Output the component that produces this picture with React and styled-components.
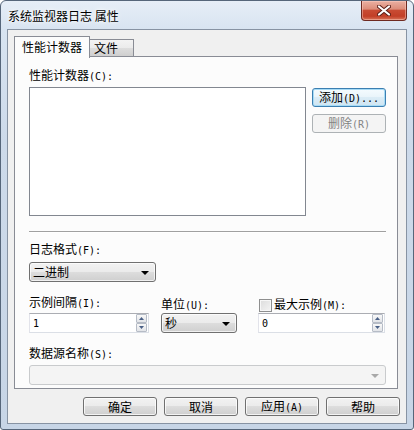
import React from "react";
import styled, { createGlobalStyle, css } from "styled-components";

const GlobalStyle = createGlobalStyle`
  html, body {
    margin: 0;
    padding: 0;
    background: #ffffff;
  }
  body {
    font-family: "Noto Sans CJK SC", "Liberation Sans", sans-serif;
    font-size: 12px;
    color: #000;
  }
`;

const Window = styled.div`
  box-sizing: border-box;
  width: 414px;
  height: 430px;
  display: flex;
  flex-direction: column;
  padding: 0 6px 5px;
  border: 1px solid #56667a;
  border-radius: 6px 6px 3px 3px;
  background: linear-gradient(180deg, #e6eef7 0px, #d8e4f1 28px, #cddaea 140px, #c7d5e6 100%);
`;

const TitleBar = styled.div`
  height: 28px;
  display: flex;
  justify-content: space-between;
  align-items: flex-start;
`;

const Title = styled.div`
  margin: 8px 0 0 1px;
  line-height: 14px;
  text-shadow: 0 0 6px #fff, 0 0 3px #fff;
`;

const CloseButton = styled.div`
  box-sizing: border-box;
  width: 46px;
  height: 20px;
  border: 1px solid #6e2a21;
  border-top: none;
  border-radius: 0 0 4px 4px;
  background: linear-gradient(180deg, #eab0a2 0%, #dc8d7a 42%, #c84b33 50%, #c23f27 80%, #d8745a 100%);
  box-shadow: inset 0 0 0 1px rgba(255, 210, 200, 0.45);
  display: flex;
  align-items: center;
  justify-content: center;
`;

const Client = styled.div`
  flex: 1;
  display: flex;
  flex-direction: column;
  border: 1px solid #8793a3;
  background: #f0f0f0;
  padding: 6px 6px 0;
`;

const TabStrip = styled.div`
  display: flex;
  align-items: flex-end;
  height: 20px;
`;

const Tab = styled.div`
  box-sizing: border-box;
  border: 1px solid #898c95;
  border-bottom: none;
  line-height: 14px;
  ${(p) =>
    p.$active
      ? css`
          height: 22px;
          margin-bottom: -2px;
          position: relative;
          z-index: 1;
          padding: 3px 7px 0;
          background: #fcfcfc;
        `
      : css`
          width: 44px;
          height: 17px;
          border-left: none;
          padding: 1px 0 0 4px;
          background: linear-gradient(180deg, #f3f3f3 0%, #ebebeb 50%, #dddddd 51%, #cfcfcf 100%);
        `}
`;

const Panel = styled.div`
  box-sizing: border-box;
  height: 333px;
  margin-right: 2px;
  border: 1px solid #898c95;
  background: #fcfcfc;
  padding: 11px 11px 0 14px;
  display: flex;
  flex-direction: column;
`;

const Label = styled.div`
  line-height: 14px;
  white-space: nowrap;
  margin-top: ${(p) => p.$top || 0}px;
  margin-bottom: ${(p) => p.$bottom || 0}px;
`;

const Hotkey = styled.span`
  font-family: "DejaVu Sans Mono", "Liberation Mono", monospace;
  font-size: 10px;
`;

const ListRow = styled.div`
  display: flex;
  gap: 6px;
  margin-top: 3px;
`;

const ListBox = styled.div`
  box-sizing: border-box;
  width: 277px;
  height: 129px;
  border: 1px solid #828790;
  background: #ffffff;
`;

const SideButtons = styled.div`
  display: flex;
  flex-direction: column;
  gap: 7px;
  padding-top: 1px;
`;

const Button = styled.button`
  box-sizing: border-box;
  width: 74px;
  height: 19px;
  padding: 0;
  border-radius: 3px;
  font-family: "Noto Sans CJK SC", sans-serif;
  font-size: 12px;
  line-height: 16px;
  white-space: nowrap;
  border: 1px solid #707070;
  color: #000;
  background: linear-gradient(180deg, #f2f2f2 0%, #ebebeb 48%, #dddddd 50%, #cfcfcf 100%);
  box-shadow: inset 0 0 0 1px rgba(255, 255, 255, 0.75);
  ${(p) =>
    p.$default &&
    css`
      border-color: #3c7fb1;
      box-shadow: inset 0 0 0 1px #a6dbf6;
      background: linear-gradient(180deg, #f5fbfe 0%, #e9f4fa 48%, #dbecf6 50%, #cfe5f2 100%);
    `}
  &:disabled {
    border-color: #adb2b5;
    color: #838383;
    background: #f4f4f4;
    box-shadow: none;
  }
`;

const Separator = styled.div`
  margin-top: 15px;
  height: 0;
  border-top: 1px solid #a0a0a0;
  border-bottom: 1px solid #ffffff;
`;

const Combo = styled.div`
  box-sizing: border-box;
  width: ${(p) => (p.$width ? `${p.$width}px` : "auto")};
  height: 20px;
  margin-top: ${(p) => p.$top || 0}px;
  display: flex;
  align-items: center;
  justify-content: space-between;
  padding: 0 6px 0 3px;
  border-radius: 3px;
  line-height: 14px;
  ${(p) =>
    p.$disabled
      ? css`
          border: 1px solid #c9cbcd;
          background: #f4f4f4;
        `
      : css`
          border: 1px solid #707070;
          background: linear-gradient(180deg, #f2f2f2 0%, #ebebeb 48%, #dddddd 50%, #cfcfcf 100%);
          box-shadow: inset 0 0 0 1px rgba(255, 255, 255, 0.7);
        `}
`;

const Arrow = styled.span`
  width: 0;
  height: 0;
  border-left: 4px solid transparent;
  border-right: 4px solid transparent;
  border-top: 4px solid ${(p) => (p.$dim ? "#a8a8a8" : "#000")};
  margin-top: 1px;
`;

const FieldRow = styled.div`
  display: flex;
  align-items: flex-end;
  margin-top: 13px;
`;

const Field = styled.div`
  display: flex;
  flex-direction: column;
  width: ${(p) => p.$width}px;
  margin-left: ${(p) => p.$gap || 0}px;
`;

const CheckLabel = styled.div`
  display: flex;
  align-items: center;
  gap: 2px;
  line-height: 14px;
  margin-left: 1px;
`;

const CheckBox = styled.span`
  box-sizing: border-box;
  width: 13px;
  height: 13px;
  border: 1px solid #8e8f8f;
  background: linear-gradient(135deg, #dcdcdc 0%, #f4f4f4 100%);
  box-shadow: inset 0 0 0 1px #f7f7f7;
`;

const SpinEdit = styled.div`
  box-sizing: border-box;
  height: 20px;
  display: flex;
  align-items: center;
  justify-content: space-between;
  padding: 0 1px 0 3px;
  background: #ffffff;
  border: 1px solid #dbdfe6;
  border-top-color: #abadb3;
  border-left-color: #e2e3ea;
`;

const Spinner = styled.div`
  display: flex;
  flex-direction: column;
  width: 11px;
  height: 18px;
`;

const SpinPart = styled.div`
  box-sizing: border-box;
  flex: 1;
  display: flex;
  align-items: center;
  justify-content: center;
  border: 1px solid #b6bcc6;
  border-radius: 1px;
  background: linear-gradient(180deg, #f8f8f8 0%, #e2e4e8 100%);
`;

const Footer = styled.div`
  display: flex;
  justify-content: flex-end;
  gap: 7px;
  margin-top: 8px;
`;

const Spin = () => (
  <Spinner>
    <SpinPart>
      <svg width="5" height="3" viewBox="0 0 5 3">
        <polygon points="0,3 2.5,0 5,3" fill="#4a6086" />
      </svg>
    </SpinPart>
    <SpinPart>
      <svg width="5" height="3" viewBox="0 0 5 3">
        <polygon points="0,0 5,0 2.5,3" fill="#4a6086" />
      </svg>
    </SpinPart>
  </Spinner>
);

const CloseGlyph = () => (
  <svg width="14" height="11" viewBox="0 0 14 11">
    <path d="M2 1.5 L12 9.5 M12 1.5 L2 9.5" stroke="#5a1d16" strokeWidth="4" strokeLinecap="round" />
    <path d="M2 1.5 L12 9.5 M12 1.5 L2 9.5" stroke="#ffffff" strokeWidth="2.2" strokeLinecap="round" />
  </svg>
);

const App = () => {
  return (
    <>
      <GlobalStyle />
      <Window>
        <TitleBar>
          <Title>系统监视器日志 属性</Title>
          <CloseButton>
            <CloseGlyph />
          </CloseButton>
        </TitleBar>
        <Client>
          <TabStrip>
            <Tab $active>性能计数器</Tab>
            <Tab>文件</Tab>
          </TabStrip>
          <Panel>
            <Label>
              性能计数器<Hotkey>(C):</Hotkey>
            </Label>
            <ListRow>
              <ListBox />
              <SideButtons>
                <Button $default>
                  添加<Hotkey>(D)...</Hotkey>
                </Button>
                <Button disabled>
                  删除<Hotkey>(R)</Hotkey>
                </Button>
              </SideButtons>
            </ListRow>

            <Separator />

            <Label $top={9}>
              日志格式<Hotkey>(F):</Hotkey>
            </Label>
            <Combo $width={127} $top={4}>
              <span>二进制</span>
              <Arrow />
            </Combo>

            <FieldRow>
              <Field $width={120}>
                <Label $bottom={2}>
                  示例间隔<Hotkey>(I):</Hotkey>
                </Label>
                <SpinEdit>
                  <Hotkey>1</Hotkey>
                  <Spin />
                </SpinEdit>
              </Field>
              <Field $width={76} $gap={12}>
                <Label>
                  单位<Hotkey>(U):</Hotkey>
                </Label>
                <Combo>
                  <span>秒</span>
                  <Arrow />
                </Combo>
              </Field>
              <Field $width={127} $gap={21}>
                <CheckLabel>
                  <CheckBox />
                  <span>
                    最大示例<Hotkey>(M):</Hotkey>
                  </span>
                </CheckLabel>
                <SpinEdit>
                  <Hotkey>0</Hotkey>
                  <Spin />
                </SpinEdit>
              </Field>
            </FieldRow>

            <Label $top={13}>
              数据源名称<Hotkey>(S):</Hotkey>
            </Label>
            <Combo $disabled $top={3}>
              <span />
              <Arrow $dim />
            </Combo>
          </Panel>
          <Footer>
            <Button>确定</Button>
            <Button>取消</Button>
            <Button>
              应用<Hotkey>(A)</Hotkey>
            </Button>
            <Button>帮助</Button>
          </Footer>
        </Client>
      </Window>
    </>
  );
};

export default App;
